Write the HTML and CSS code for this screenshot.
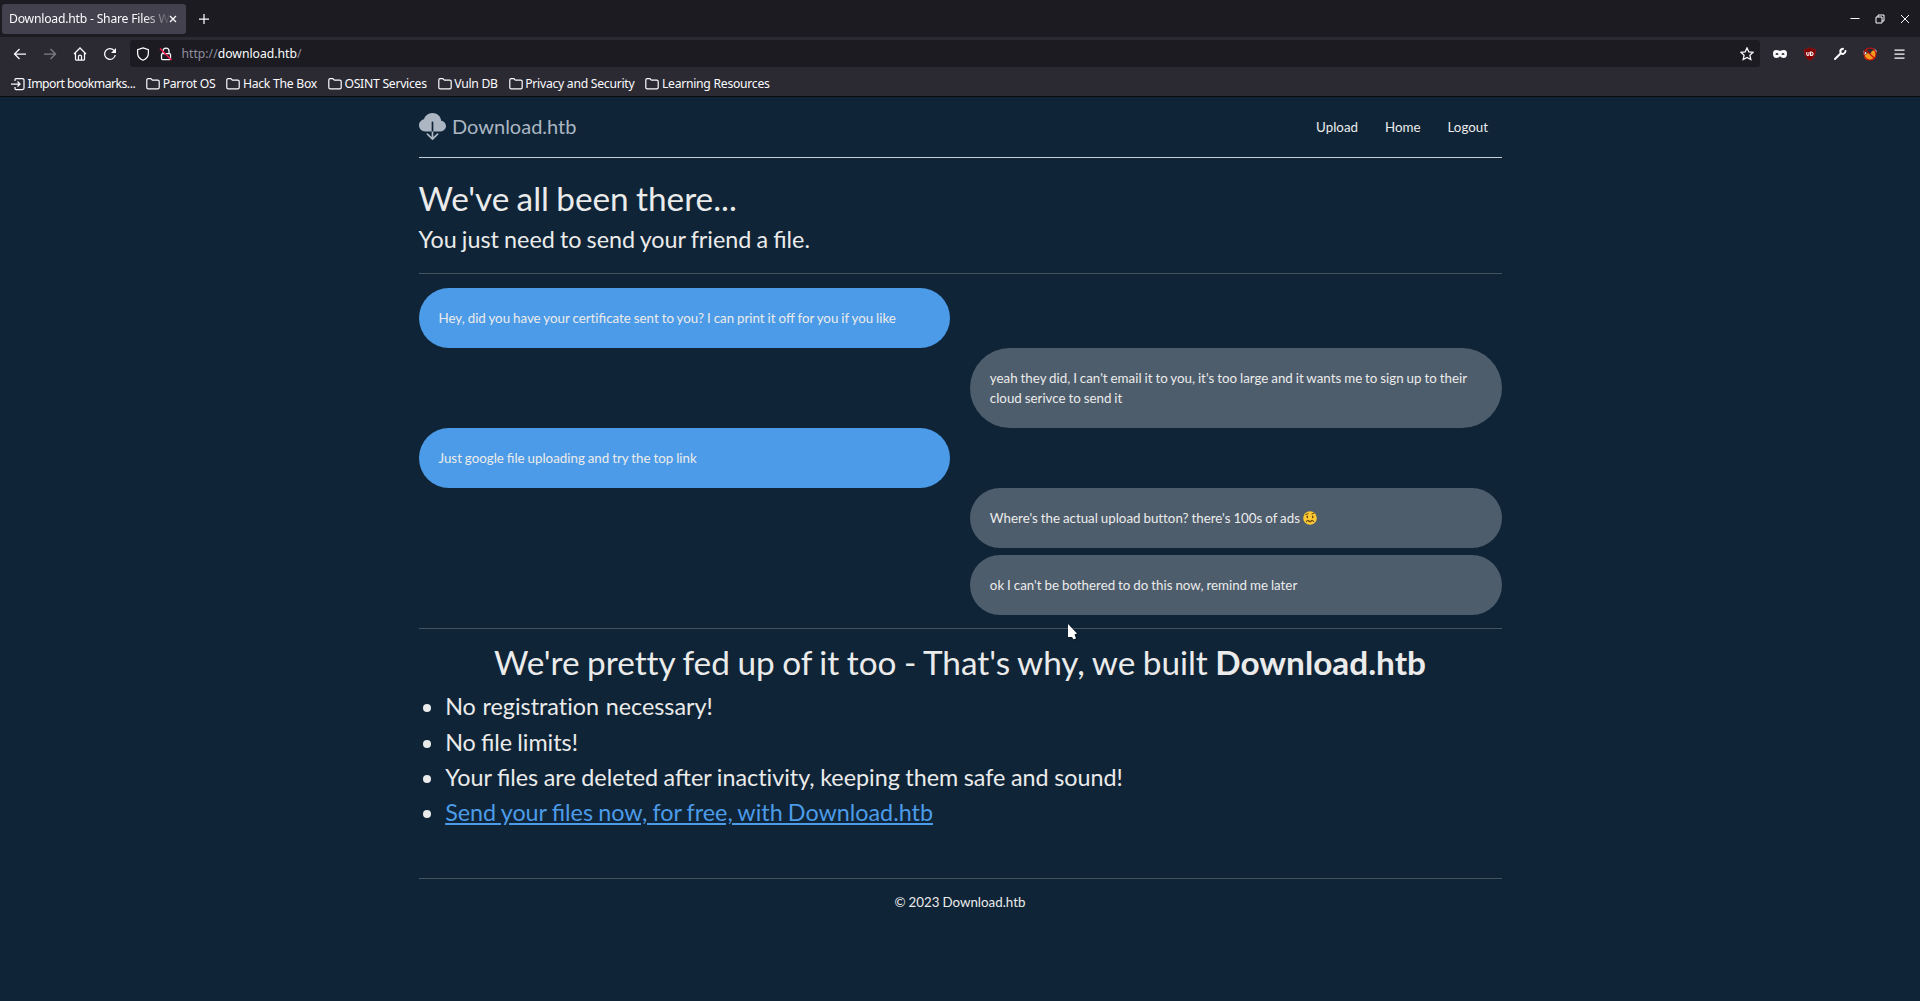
FILE: index.html
```html
<!DOCTYPE html>
<html lang="en">
<head>
<meta charset="utf-8">
<title>Download.htb - Share Files With Ease</title>
<link rel="stylesheet" href="styles.css">
</head>
<body>
<svg width="0" height="0" class="defs"><symbol id="folder" viewBox="0 0 14 14"><path d="M.8 10.5v-7.500Q.8 1.600 2.200 1.600h2.600l1.600 1.600h5.400q1.400 0 1.400 1.400v5.900q0 1.400-1.400 1.400h-9.600q-1.400 0-1.400-1.400z" fill="none" stroke="currentColor" stroke-width="1.200"/></symbol></svg>
<div class="browser">
  <div class="tabbar">
    <div class="tab"><span class="tab-title">Download.htb - Share Files W</span><svg class="tab-close" width="8" height="8" viewBox="0 0 8 8"><path d="M1 1l6 6M7 1l-6 6"/></svg></div>
    <svg class="newtab" width="10" height="10" viewBox="0 0 10 10"><path d="M5 0v10M0 5h10"/></svg>
    <div class="winctl">
      <svg width="10" height="10" viewBox="0 0 10 10"><path d="M.5 4.500h9"/></svg>
      <svg width="10" height="10" viewBox="0 0 10 10"><path d="M1 3h6v6H1zM3 3V1h6v6H7"/></svg>
      <svg width="10" height="10" viewBox="0 0 10 10"><path d="M1 1l8 8M9 1l-8 8"/></svg>
    </div>
  </div>
  <div class="toolbar">
    <div class="navbtns">
      <svg width="14" height="14" viewBox="0 0 14 14"><path d="M13 7H1.500M6.500 2l-5 5 5 5"/></svg>
      <svg class="dim" width="14" height="14" viewBox="0 0 14 14"><path d="M1 7h11.500M7.500 2l5 5-5 5"/></svg>
      <svg width="14" height="14" viewBox="0 0 14 14"><path d="M1 7l6-6 6 6M2.500 6v6.200q0 .8.800.8h7.400q.8 0 .8-.8V6M5.500 13V9.200q0-1.200 1.500-1.200t1.500 1.200V13"/></svg>
      <svg width="14" height="14" viewBox="0 0 14 14"><path d="M12.300 8A5.400 5.400 0 1 1 11 3.300l1.300 1.400"/><path d="M13 1v5H8z" fill="currentColor" stroke="none"/></svg>
    </div>
    <div class="urlbar">
      <svg width="14" height="14" viewBox="0 0 14 14"><path d="M7 .8l5.400 1.900v3.500q0 4.600-5.400 7.100Q1.600 10.800 1.600 6.200V2.700z"/></svg>
      <svg width="14" height="14" viewBox="0 0 14 14"><path d="M4 6V4a3 3 0 0 1 6 0v2M3.500 6.500h7q1 0 1 1v4q0 1-1 1h-7q-1 0-1-1v-4q0-1 1-1z"/><path d="M1 1.500l11.500 11.500" class="strike"/></svg>
      <span class="url">http://<b>download.htb</b>/</span>
      <svg class="star" width="14" height="14" viewBox="0 0 14 14"><path d="M7 .9l1.800 3.900 4.300.5-3.200 2.900.9 4.300L7 10.400l-3.800 2.100.9-4.300L.9 5.300l4.300-.5z"/></svg>
    </div>
    <div class="exts">
      <svg width="14" height="14" viewBox="0 0 14 14"><path fill="#fbfbfe" stroke="none" fill-rule="evenodd" d="M3 3q2 0 4 1 2-1 4-1 3 0 3 3.500 0 4.500-3.500 4.500Q8.500 11 7 9.200 5.500 11 3.500 11 0 11 0 6.500 0 3 3 3zM2.300 7.200q1.700 1.500 3.400 0-1.700-2.400-3.400 0zm6 0q1.700 1.500 3.400 0-1.700-2.400-3.400 0z"/></svg>
      <svg width="14" height="14" viewBox="0 0 14 14"><path fill="#800000" stroke="#971b20" stroke-width=".6" d="M7 .6q2.600 1.800 5.800 1.800 0 8.200-5.800 11Q1.200 10.600 1.200 2.400 4.400 2.400 7 .6z"/><path class="ublock-mark" d="M3.800 5v2.300q0 1.200 1.100 1.200t1.100-1.200V5M7.600 5v3.500h.8q1.700 0 1.700-1.700T8.400 5z"/></svg>
      <svg width="14" height="14" viewBox="0 0 14 14"><path class="wrench" d="M2 12l5.800-5.800"/><path class="wrench" d="M10 1.800q-2.900.4-2.700 3.200 1 2.500 3.200 1.800 1.800-.4 2-2.800"/></svg>
      <svg width="14" height="14" viewBox="0 0 14 14"><path fill="#f39a1f" stroke="none" d="M2 8l3-2 2 1 2-3 3-1 1 4-1 4-3 2H4L1.500 11z"/><path fill="#ddd" stroke="none" d="M.5 3.500L4 6 1 8.500zM10.500 1l3 2.500v2.500z"/><circle class="ban" cx="7" cy="7" r="6"/><path class="ban" d="M3 3l8 8"/></svg>
      <svg width="13" height="14" viewBox="0 0 12 14"><path d="M1 3h10M1 7h10M1 11h10"/></svg>
    </div>
  </div>
  <div class="bookmarks">
    <span class="bm import"><svg width="14" height="14" viewBox="0 0 14 14"><path d="M4 4V2.500q0-1 1-1h6.500q1.500 0 1.500 1.500v8q0 1.500-1.500 1.500H5q-1 0-1-1V10M0 7h9M6.500 4.500L9 7 6.500 9.500"/></svg>Import bookmarks...</span>
    <span class="bm"><svg width="14" height="14"><use href="#folder"/></svg>Parrot OS</span>
    <span class="bm"><svg width="14" height="14"><use href="#folder"/></svg>Hack The Box</span>
    <span class="bm"><svg width="14" height="14"><use href="#folder"/></svg>OSINT Services</span>
    <span class="bm"><svg width="14" height="14"><use href="#folder"/></svg>Vuln DB</span>
    <span class="bm"><svg width="14" height="14"><use href="#folder"/></svg>Privacy and Security</span>
    <span class="bm"><svg width="14" height="14"><use href="#folder"/></svg>Learning Resources</span>
  </div>
</div>
<main class="container">
  <header class="site-header">
    <a class="brand"><svg width="27" height="27" viewBox="0 0 16 16"><path fill="currentColor" d="M8 0a5.530 5.530 0 0 0-3.594 1.342c-.766.66-1.321 1.520-1.464 2.383C1.266 4.095 0 5.555 0 7.318 0 9.366 1.708 11 3.781 11H7.500V5.500a.5.5 0 0 1 1 0V11h4.188C14.502 11 16 9.570 16 7.773c0-1.636-1.242-2.969-2.834-3.194C12.923 1.999 10.690 0 8 0zm-.354 15.854a.5.5 0 0 0 .708 0l3-3a.5.5 0 0 0-.708-.708L8.500 14.293V11h-1v3.293l-2.146-2.147a.5.5 0 0 0-.708.708l3 3z"/></svg>Download.htb</a>
    <nav class="links"><a>Upload</a><a>Home</a><a>Logout</a></nav>
  </header>
  <h1>We've all been there...</h1>
  <h3>You just need to send your friend a file.</h3>
  <hr>
  <div class="chat">
    <div class="msg them">Hey, did you have your cer<span class="plain">ti</span>ficate sent to you? I can print it off for you if you like</div>
    <div class="msg me">yeah they did, I can't email it to you, it's too large and it wants me to sign up to their cloud serivce to send it</div>
    <div class="msg them">Just google file uploading and try the top link</div>
    <div class="msg me plain">Where's the actual upload button? there's 100s of ads <svg class="emoji" width="14" height="14" viewBox="0 0 14 14"><circle cx="7" cy="7" r="6.800" fill="#fcc932"/><g fill="none" stroke="#6b4a12" stroke-linecap="round"><path d="M2.800 3.600L5 2.700M9 2.900l2.200-.7"/><path stroke-width="1.500" d="M4.300 5.300v1.200M9.700 5.300v1.200"/><path stroke-width="1.200" d="M3.400 10.500q1.200-1.800 2.400-.5t2.400 0 2.400.5"/></g></svg></div>
    <div class="msg me spaced">ok I can't be bothered to do this now, remind me later</div>
  </div>
  <hr>
  <h1 class="center plain">We're pretty fed up of it too - That's why, we built <strong>Download.htb</strong></h1>
  <ul>
    <li class="plain loose">No registration necessary!</li>
    <li>No file limits!</li>
    <li class="wide">Your files are deleted after inac<span class="plain">ti</span>vity, keeping them safe and sound!</li>
    <li><a class="send">Send your files now, for free, with Download.htb</a></li>
  </ul>
  <footer>© 2023 Download.htb</footer>
</main>
<svg class="cursor" width="12" height="18" viewBox="0 0 12 18"><path fill="#fff" d="M1 1l9 9.500-2.500 1L9 15.500l-2.500.8L5 14H1z"/></svg>
</body>
</html>
```
FILE: styles.css
```css
* { box-sizing: border-box; }
body { margin: 0; height: 1001px; overflow: hidden; background: #0f2537; color: #ebebeb; font: 13.333px/20px Lato, sans-serif; }
svg { flex: none; }
.defs { position: absolute; }

.browser { height: 97px; background: #2b2a33; border-bottom: 1px solid #0c0c0d; color: #fbfbfe; font: 12.200px/18px "Noto Sans", sans-serif; white-space: nowrap; }
.browser svg { fill: none; stroke: currentColor; stroke-width: 1.250; }
.browser .strike { stroke: #f8184b; stroke-width: 1.400; }
.browser .ublock-mark { stroke: #fff; stroke-width: 1.100; }
.browser .wrench { stroke: #fbfbfe; stroke-width: 2; stroke-linecap: round; }
.browser .ban { stroke: #c4120c; stroke-width: 1.100; }
.tabbar { height: 37px; background: #1c1b22; display: flex; align-items: center; padding-left: 2px; }
.tab { width: 184px; height: 30px; background: #42414d; border-radius: 3px; display: flex; align-items: center; padding-left: 7px; }
.tab-title { width: 160px; letter-spacing: -.22px; -webkit-mask-image: linear-gradient(90deg, #000 134px, transparent 162px); mask-image: linear-gradient(90deg, #000 134px, transparent 162px); }
.newtab { margin-left: 13px; }
.winctl { margin-left: auto; display: flex; gap: 15px; padding-right: 10px; }
.winctl svg { stroke-width: 1; }
.toolbar { height: 33px; display: flex; align-items: center; }
.navbtns { display: flex; gap: 16px; width: 130px; padding-left: 13px; }
.dim { opacity: .4; }
.urlbar { width: 1630px; height: 27px; background: #1c1b22; border-radius: 3px; display: flex; align-items: center; padding: 0 6px; gap: 9px; }
.url { color: #8f8f9d; margin-left: -.5px; }
.url b { color: #fbfbfe; font-weight: normal; }
.star { margin-left: auto; }
.exts { display: flex; gap: 16px; padding-left: 13px; }
.bookmarks { height: 26px; display: flex; align-items: center; padding: 1px 0 0 11px; gap: 11px; letter-spacing: -.27px; }
.bm { display: flex; align-items: center; gap: 2.500px; }
.import { letter-spacing: -.5px; }

.container { width: 1083px; margin: 0 auto; word-spacing: -.036em; }
.site-header { height: 61px; border-bottom: 1px solid #c5ced6; display: flex; justify-content: space-between; }
.brand { display: flex; align-items: center; gap: 6.500px; height: 30px; margin-top: 14px; color: #abb6c2; font-size: 20px; }
.links { display: flex; gap: 27px; padding: 20px 13.500px 0 0; }
h1, h3 { font-weight: 400; margin: 0 0 6.670px; line-height: 1.2; word-spacing: -.036em; }
h1 { font-size: 33.330px; }
h3 { font-size: 23.330px; margin-bottom: 20.400px; }
.site-header + h1 { margin-top: 20px; }
hr { border: 0; height: 1px; background: #435461; margin: 13.330px 0; }
h3 + hr { margin-bottom: 14px; }
.chat { display: flex; flex-direction: column; }
.msg { width: 531.670px; padding: 20px; border-radius: 40px; }
.them { background: #4c9be8; }
.me { background: #4e5d6c; align-self: flex-end; }
.spaced { margin-top: 6.670px; }
.plain { font-variant-ligatures: none; }
.emoji { vertical-align: -2px; }
.center { text-align: center; }
hr + .center { margin-top: -.600px; word-spacing: -.03em; }
ul { margin: 7.670px 0 0; padding-left: 26.670px; font-size: 23.330px; line-height: 35.200px; word-spacing: -.036em; }
.loose { word-spacing: .03em; }
.wide { word-spacing: -.018em; }
.send { color: #4c9be8; text-decoration: underline; }
footer { margin-top: 47.600px; border-top: 1px solid #435461; padding-top: 13.330px; text-align: center; }
.cursor { position: absolute; left: 1067px; top: 623px; filter: drop-shadow(1px 1px 1px rgba(0,0,0,.5)); }
```
